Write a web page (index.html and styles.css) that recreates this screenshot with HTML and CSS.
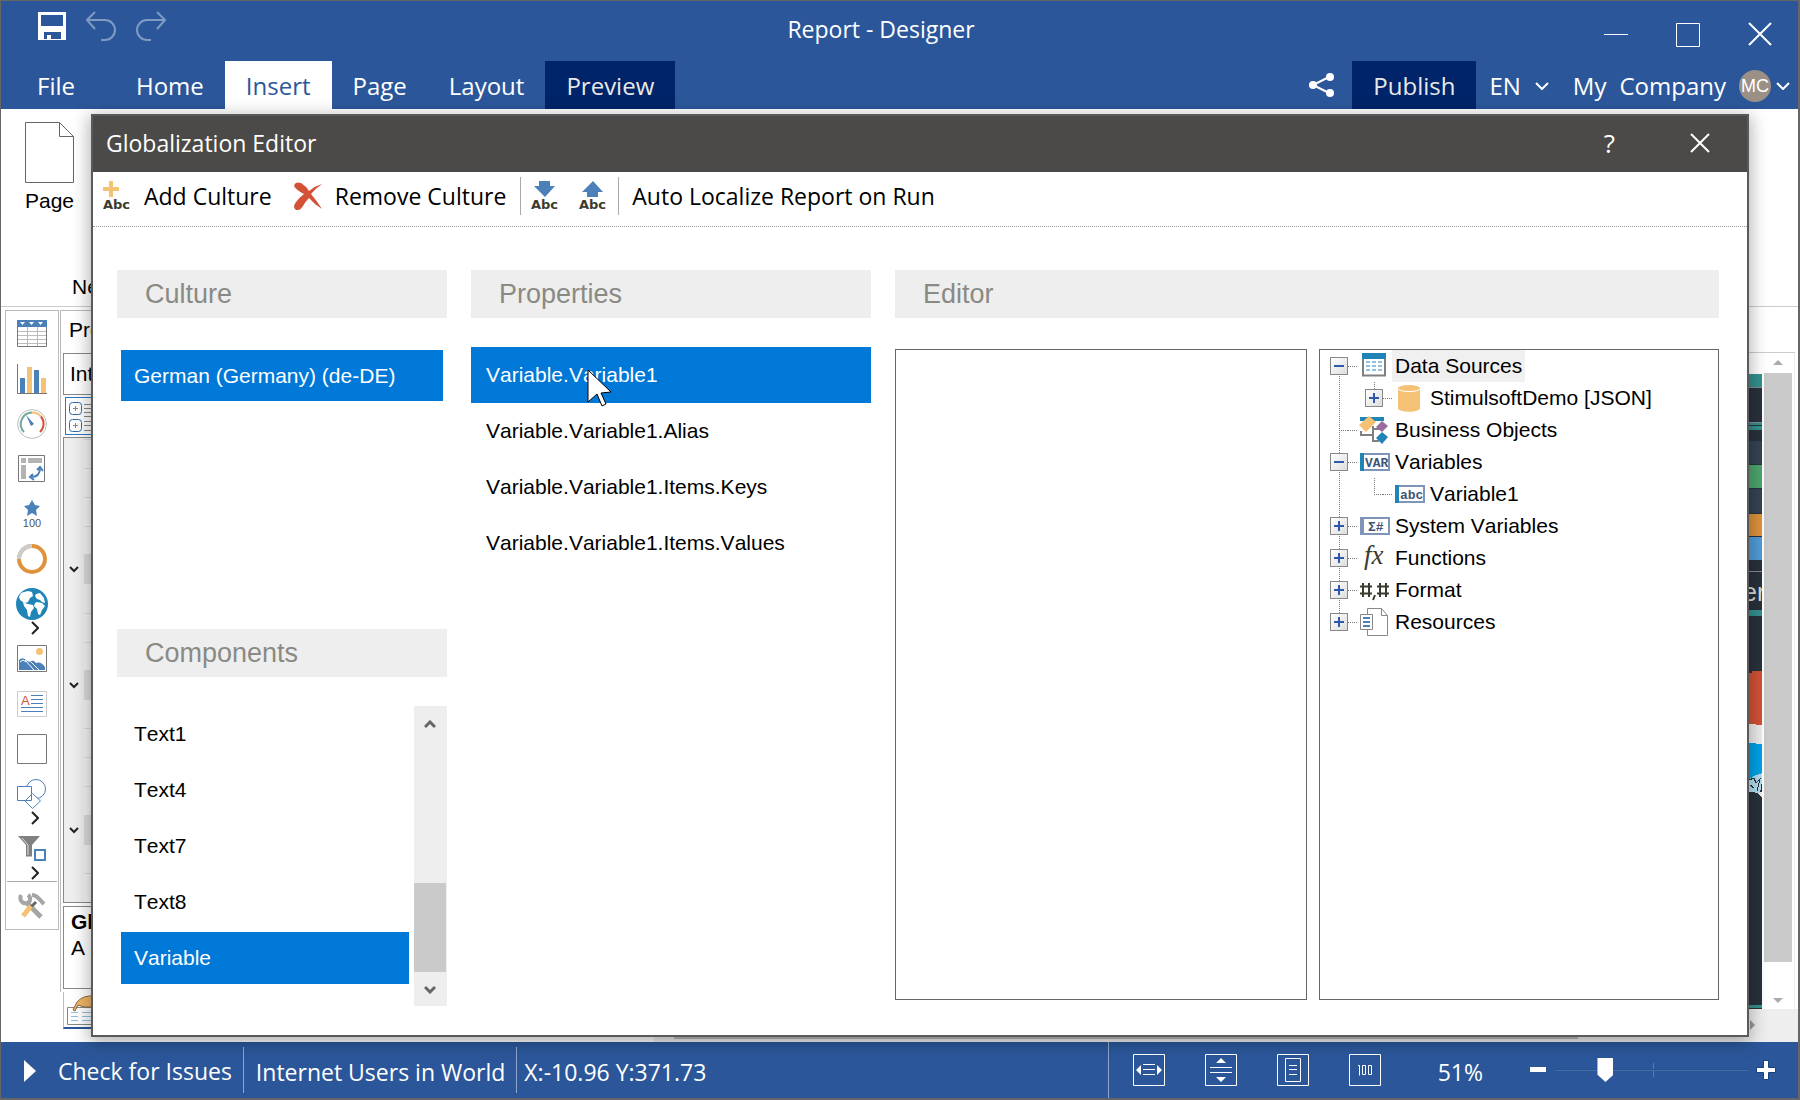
FILE: index.html
```html
<!DOCTYPE html>
<html lang="en">
<head>
<meta charset="utf-8">
<title>Report - Designer</title>
<link rel="stylesheet" href="styles.css">
</head>
<body>
<div class="window">
  <header class="top">
    <div class="titlebar">
      <div class="quick">
        <button aria-label="Save"><svg width="28" height="28" viewBox="0 0 28 28"><path fill="#fff" fill-rule="evenodd" d="M0 0h28v28H0zM3 3v11h22V3zM6 20v7h3v-4h4v4h10v-7z"/></svg></button>
        <button aria-label="Undo"><svg class="faded" width="30" height="31" viewBox="0 0 30 31"><path d="M9 1 1 9l8 9M1 9h18a10 10 0 0 1 0 20h-4"/></svg></button>
        <button aria-label="Redo"><svg class="faded" width="30" height="31" viewBox="0 0 30 31"><path d="m21 1 8 8-8 9M29 9H11a10 10 0 0 0 0 20h4"/></svg></button>
      </div>
      <h1>Report - Designer</h1>
      <div class="winctl">
        <button aria-label="Minimize"><svg width="24" height="26"><path d="M0 12.500h24"/></svg></button>
        <button aria-label="Maximize"><svg width="24" height="26"><path d="M.5 1.500h23v23H.5z"/></svg></button>
        <button aria-label="Close"><svg width="24" height="26"><path d="m1 1 22 22M23 1 1 23" stroke-width="2"/></svg></button>
      </div>
    </div>
    <nav class="tabs">
      <button class="file">File</button>
      <button>Home</button>
      <button class="on">Insert</button>
      <button>Page</button>
      <button>Layout</button>
      <button class="dark">Preview</button>
      <span class="grow"></span>
      <button class="share" aria-label="Share"><svg width="26" height="26" viewBox="0 0 26 26"><path d="M22 4 4 13l18 9" fill="none" stroke="#fff" stroke-width="2"/><g fill="#fff"><circle cx="21" cy="5" r="4"/><circle cx="4" cy="13" r="4"/><circle cx="21" cy="21" r="4"/></g></svg></button>
      <button class="dark publish">Publish</button>
      <button class="lang">EN <svg class="chev" width="14" height="8"><path d="m1 1 6 6 6-6"/></svg></button>
      <button class="account"><span>My</span><span>Company</span><span class="avatar">MC</span><svg class="chev" width="14" height="8"><path d="m1 1 6 6 6-6"/></svg></button>
    </nav>
  </header>

  <section class="ribbon">
    <button class="page-btn"><svg width="49" height="61" viewBox="0 0 49 61"><path d="M.5.5h34l14 14v46H.5zM34.500.5v14h14" fill="#fff" stroke="#666"/></svg>Page</button>
    <div class="group-name">Ne</div>
  </section>

  <main class="work">
    <aside class="tools">
      <button aria-label="Table"><svg width="30" height="27" viewBox="0 0 30 27"><path d="M.5.5h29v26H.5z" fill="#fff" stroke="#777"/><path d="M0 0h30v7H0z" fill="#4b80b9"/><path d="M3 2h5L5.500 5zM12 2h5l-2.500 3zM21 2h5l-2.500 3z" fill="#fff"/><path d="M1 11.500h28M1 15.500h28M1 19.500h28M1 23.500h28M10.500 7v19M20.500 7v19" stroke="#bbb"/></svg></button>
      <button aria-label="Chart"><svg width="30" height="30" viewBox="0 0 30 30"><path d="M.5 0v29.500H30" fill="none" stroke="#777"/><path d="M3 14h5v15H3zM17 6h5v23h-5z" fill="#4b80b9"/><path d="M10 3h5v26h-5zM24 14h5v15h-5z" fill="#f4c175"/></svg></button>
      <button aria-label="Gauge"><svg width="30" height="30" viewBox="0 0 30 30" fill="none"><circle cx="15" cy="15" r="14.400" stroke="#bbb"/><g stroke-width="2"><path d="M7 23A11.500 11.500 0 0 1 15 3.500" stroke="#6fa99c"/><path d="M15 3.500a11.500 11.500 0 0 1 9 4" stroke="#f4c175"/><path d="M24 7.500A11.500 11.500 0 0 1 23 23" stroke="#d35135"/></g><path d="m9 6 8 9-3 2z" fill="#4b80b9"/></svg></button>
      <button aria-label="Pivot table"><svg width="27" height="27" viewBox="0 0 27 27"><path d="M.5.5h26v26H.5z" fill="#fff" stroke="#777"/><path d="M3 3h5v5H3zM10 3h14v5H10zM3 10h5v14H3z" fill="#b3b3b3"/><path d="M13 22c6 0 9-3 9-9M15 19l-3 3 4 3M19 15l3-3 3 4" fill="none" stroke="#4b80b9" stroke-width="2"/></svg></button>
      <button aria-label="Indicator"><svg width="30" height="28" viewBox="0 0 30 28"><path d="m15 0 3 5 5 1-4 4 1 6-5-3-5 3 1-6-4-4 5-1z" fill="#4b80b9"/><text x="15" y="27" text-anchor="middle" font-size="11" fill="#555">100</text></svg></button>
      <button aria-label="Progress"><svg width="30" height="30" viewBox="0 0 30 30" fill="none" stroke-width="4"><circle cx="15" cy="15" r="13" stroke="#e0933e"/><path d="M2 15A13 13 0 0 1 15 2" stroke="#ccc"/></svg></button>
      <button aria-label="Map"><svg width="32" height="32" viewBox="0 0 32 32"><circle cx="16" cy="16" r="16" fill="#2084b6"/><path d="M8 4l4-1 4 1 1 4-3 2-2 4-3 1 3 1 5 1 1 3-3 4-1 5-2-1-1-6-3-4-1-4-3-2-1-3 2-4zM20 6l4-1 4 5 1 5-3-1-2-2-3-1-2-3zM21 14l5 1 3 3-3 4-2 5-2-1-1-5-3-3 1-3z" fill="#fff"/></svg></button>
      <svg class="more" width="8" height="14"><path d="m1 1 6 6-6 6"/></svg>
      <button aria-label="Image"><svg width="30" height="27" viewBox="0 0 30 27"><path d="M.5.500h29v26H.5z" fill="#fff" stroke="#777"/><path d="M2 25V15q4-4 8 1l3 1q3-3 6 1 5-2 9 4v3z" fill="#4b80b9"/><path d="m8 15 9 10M14 17l8 8M3 17l3-2 3 2" fill="none" stroke="#fff"/><circle cx="22.500" cy="6.500" r="3.500" fill="#f4c175"/></svg></button>
      <button aria-label="Text"><svg width="30" height="26" viewBox="0 0 30 26"><path d="M.5.5h29v25H.5z" fill="#fff" stroke="#ccc"/><path d="M14 4.500h12M14 8.500h12M14 12.500h12M4 16.500h22M4 20.500h22" stroke="#4b80b9"/><text x="4" y="14" font-size="13" fill="#d35135">A</text></svg></button>
      <button aria-label="Panel"><svg width="30" height="30"><path d="M.5.5h29v29H.5z" fill="#fff" stroke="#777"/></svg></button>
      <button aria-label="Shape"><svg width="30" height="30" viewBox="0 0 30 30" fill="#fff" stroke="#4b80b9"><circle cx="19" cy="10" r="9.500"/><path d="M.5 7.500h14v14H.5zM15.500 14.500l8 7.500-8 7.500-7.500-7.500z"/></svg></button>
      <svg class="more" width="8" height="14"><path d="m1 1 6 6-6 6"/></svg>
      <button aria-label="Filter"><svg width="30" height="26" viewBox="0 0 30 26"><path d="M1 0h22l-8 9v11.500H9V9z" fill="#808080"/><path d="m5 2 6 7v10" fill="none" stroke="#ddd"/><path d="M18 14h10v10H18z" fill="#fff" stroke="#4b80b9" stroke-width="2"/></svg></button>
      <svg class="more" width="8" height="14"><path d="m1 1 6 6-6 6"/></svg>
      <button class="setup" aria-label="Tools"><svg width="28" height="26" viewBox="0 0 28 26" fill="none" stroke-width="5"><path d="m9 10 14 14" stroke="#a5a5a5"/><path d="M3 2c-2 5 1 9 6 8 4-1 4-6 1-8" stroke="#a5a5a5" stroke-width="4"/><path d="m18 9-7 7" stroke="#666" stroke-width="3"/><path d="M13 13 5 23" stroke="#f4c175"/><path d="M14 2c5 0 7 4 12 9" stroke="#a5a5a5" stroke-width="4"/></svg></button>
    </aside>

    <aside class="props">
      <div class="props-title">Pro</div>
      <div class="props-select">Int</div>
      <div class="props-mode"><svg width="30" height="36" viewBox="0 0 30 36" fill="none"><g stroke="#2b6cb0"><rect x="3.500" y="4.500" width="12" height="12" rx="3"/><rect x="3.500" y="21.500" width="12" height="12" rx="3"/></g><path d="M7 10.500h5M9.500 8v5M7 27.500h5M9.500 25v5M18 6.500h12M18 10.500h12M18 14.500h12M18 18.500h12M18 23.500h12M18 27.500h12M18 32.500h12" stroke="#888"/></svg></div>
      <div class="props-grid">
        <svg width="30" height="464" viewBox="0 0 30 464"><path d="M20 0h10v464H20z" fill="#f5f5f5"/><path d="M20 116h10v30H20zM20 232h10v30H20zM20 377h10v30H20z" fill="#dcdcdc"/><path d="M20 1.500h10M20 30.500h10M20 59.500h10M20 88.500h10M20 175.500h10M20 204.500h10M20 290.500h10M20 319.500h10M20 348.500h10M20 435.500h10" stroke="#ddd"/><path d="m6 129 4 4 4-4M6 245l4 4 4-4M6 390l4 4 4-4" fill="none" stroke="#222" stroke-width="2"/></svg>
      </div>
      <div class="props-help"><b>Gl</b><span>A</span></div>
      <div class="props-tab"><svg width="30" height="35" viewBox="0 0 30 35"><path d="M3.500 15.500h30v17h-30z" fill="#fff" stroke="#888"/><path d="M7 20.500h7M18 20.500h9M7 24.500h7M18 24.500h9M7 28.500h7M18 28.500h9" stroke="#8fbfe3"/><path d="m9 18 4-8q6-7 17-6v11H20l-6-2-3 6z" fill="#f0b565" stroke="#8a6a40"/></svg></div>
    </aside>

    <section class="canvas">
      <svg width="13" height="635" viewBox="0 0 13 635" shape-rendering="crispEdges">
        <path fill="#29313c" d="M0 0h13v635H0z"/>
        <path fill="#32918f" d="M0 0h13v13H0zM0 48h13v8H0zM0 236h13v6H0zM0 631h13v3H0z"/>
        <path fill="#889" d="M0 13h13v1H0zM0 48h13v1H0zM0 197h13v1H0z"/>
        <path fill="#29313c" d="M0 51h13v1H0z"/>
        <path fill="#354356" d="M0 67h13v23H0zM0 115h13v24H0z"/>
        <path fill="#4ea56e" d="M0 91h13v23H0z"/>
        <path fill="#de923c" d="M0 140h13v22H0z"/>
        <path fill="#529cd8" d="M0 163h13v23H0z"/>
        <path fill="#d35135" d="M0 299h3v-2h10v54H0z"/>
        <path fill="#eee" d="M0 350l13 1v19H0zM9 418h4v6l-4-4z"/>
        <path fill="#00a2e8" d="M0 369l13 1v35H0z"/>
        <path fill="#b4dff2" d="M0 405l7-4 6-2v8l-2 12-11-1z"/>
        <path fill="none" stroke="#29313c" d="M0 406l5-2 2 5 4-4-3 12M1 411l4 3"/>
        <text x="-6" y="227" font-size="25" fill="#ddd">er</text>
      </svg>
      <div class="vscroll"><i class="up"></i><span></span><i class="down"></i></div>
    </section>
    <div class="hscroll"><span></span></div>
    <i class="hscroll-end"></i>
  </main>

  <footer class="status">
    <button class="check"><svg width="12" height="22"><path d="M0 0l12 11L0 22z" fill="#fff"/></svg>Check for Issues</button>
    <span class="cell report">Internet Users in World</span>
    <span class="cell coords">X:-10.96 Y:371.73</span>
    <div class="views">
      <button aria-label="Page width"><svg width="32" height="32" viewBox="0 0 32 32"><path d="M.5.500h31v31H.500zM10 10.500h12M10 15.500h12M10 20.500h12" class="ln"/><path d="M8 11v10l-5-5zM24 11v10l5-5z" fill="#fff"/></svg></button>
      <button aria-label="Page height"><svg width="32" height="32" viewBox="0 0 32 32"><path d="M.5.500h31v31H.500zM5 13.500h22M5 18.500h22" class="ln"/><path d="M11 9h10l-5-5zM11 23h10l-5 5z" fill="#fff"/></svg></button>
      <button aria-label="Whole page"><svg width="32" height="32" viewBox="0 0 32 32"><path d="M.5.500h31v31H.500zM8.500 4.500h15v23h-15zM12 11.500h8M12 15.500h8M12 20.500h8" class="ln"/></svg></button>
      <button aria-label="Actual size"><svg width="32" height="32" viewBox="0 0 32 32"><path d="M.5.500h31v31H.500zM9 11.500h1.500v10M13.500 11.500h3v9h-3zM19.500 11.500h3v9h-3z" class="ln"/></svg></button>
      <span class="percent">51%</span>
      <button class="minus" aria-label="Zoom out"><svg width="18" height="8"><path d="M1 1h16v5H1z" fill="#fff"/></svg></button>
      <input type="range" min="0" max="100" value="24" aria-label="Zoom">
      <button aria-label="Zoom in"><svg width="20" height="20" viewBox="0 0 20 20"><path d="M7.500.5h5v7h7v5h-7v7h-5v-7h-7v-5h7z" fill="#fff" stroke="#17427f"/></svg></button>
    </div>
  </footer>

  <div class="dialog" role="dialog" aria-label="Globalization Editor">
    <div class="dlg-title">
      <h2>Globalization Editor</h2>
      <button class="help" aria-label="Help">?</button>
      <button aria-label="Close"><svg width="20" height="20"><path d="m1 1 18 18M19 1 1 19" stroke="#fff" stroke-width="2"/></svg></button>
    </div>
    <div class="dlg-tools">
      <button class="add"><svg width="28" height="30" viewBox="0 0 28 30"><path d="M6 0h4v6h6v4h-6v6H6v-6H0V6h6z" fill="#f4c175"/><text x="0" y="28" class="abc">Abc</text></svg>Add Culture</button>
      <button class="remove"><svg width="28" height="28" viewBox="0 0 28 28"><path d="M0 4Q1-1 7 1q5 3 8 8 6-5 13-7-7 5-11 10 6 7 11 15-8-5-13-11-4 4-6 8-3 5-7 4-4-3 0-8 4-5 8-8Q2 8 0 4z" fill="#d35135"/></svg>Remove Culture</button>
      <div class="xfer">
        <button aria-label="Export"><svg width="28" height="30" viewBox="0 0 28 30"><path d="M8 0h11v5h5l-10 11L3 5h5z" fill="#4b80b9"/><text x="0" y="28" class="abc">Abc</text></svg></button>
        <button aria-label="Import"><svg width="28" height="30" viewBox="0 0 28 30"><path d="M8 16h11v-5h5L14 0 3 11h5z" fill="#4b80b9"/><text x="0" y="28" class="abc">Abc</text></svg></button>
      </div>
      <button class="auto">Auto Localize Report on Run</button>
    </div>
    <div class="dlg-body">
      <div class="col">
        <h3>Culture</h3>
        <div class="list cultures"><button class="sel">German (Germany) (de-DE)</button></div>
        <h3>Components</h3>
        <div class="components">
          <div class="list">
            <button>Text1</button>
            <button>Text4</button>
            <button>Text7</button>
            <button>Text8</button>
            <button class="sel">Variable</button>
          </div>
          <div class="scroll">
            <svg width="12" height="9"><path d="m1 7 5-5 5 5"/></svg>
            <span></span>
            <svg width="12" height="9"><path d="m1 2 5 5 5-5"/></svg>
          </div>
        </div>
      </div>
      <div class="col">
        <h3>Properties</h3>
        <div class="list properties">
          <button class="sel">Variable.Variable1</button>
          <button>Variable.Variable1.Alias</button>
          <button>Variable.Variable1.Items.Keys</button>
          <button>Variable.Variable1.Items.Values</button>
        </div>
      </div>
      <div class="col">
        <h3>Editor</h3>
        <div class="editor">
          <textarea aria-label="Editor"></textarea>
          <ul class="tree">
            <li><div class="node"><button class="tg" aria-label="Collapse"></button><svg class="ic" width="30" height="28" viewBox="0 0 30 28"><path d="M3 4.500h22v19H3z" fill="#fff" stroke="#808080" stroke-width="2"/><path d="M2 1h24v6H2z" fill="#2084b6"/><path d="M6 10h16M6 14h16M6 18h16" stroke="#8fc3e6" stroke-width="2" stroke-dasharray="4 2"/></svg><span class="hot">Data Sources</span></div>
              <ul><li><div class="node"><button class="tg plus" aria-label="Expand"></button><svg class="ic" width="30" height="28" viewBox="0 0 30 28"><path d="M3 4v20c0 5 22 5 22 0V4z" fill="#f4c175"/><ellipse cx="14" cy="4" rx="11" ry="3" fill="#f4c175"/><path d="M3 4.500c0 4 22 4 22 0" fill="none" stroke="#fff"/></svg><span>StimulsoftDemo [JSON]</span></div></li></ul></li>
            <li><div class="node"><i class="stub"></i><svg class="ic" width="30" height="28" viewBox="0 0 30 28"><path d="M0 1h24v4H0z" fill="#2084b6"/><path d="M1 15v4h11M13 10v15h6M13 13h8" fill="none" stroke="#808080" stroke-width="2"/><path d="m-1 9 10-9 7 6-10 10z" fill="#f4c175"/><path d="m16 11 6-6 6 5-6 6z" fill="#9b6b9e"/><path d="m16 22 6-6 6 5-6 7z" fill="#2084b6"/></svg><span>Business Objects</span></div></li>
            <li><div class="node"><button class="tg" aria-label="Collapse"></button><svg class="ic" width="30" height="18" viewBox="0 0 30 18"><path d="M1 1h28v16H1z" fill="#fff" stroke="#7f95b8" stroke-width="2"/><path d="M0 0h4v18H0z" fill="#2084b6"/><text x="5" y="14" class="tag">VAR</text></svg><span>Variables</span></div>
              <ul><li><div class="node"><i class="stub"></i><svg class="ic" width="30" height="18" viewBox="0 0 30 18"><path d="M1 1h28v16H1z" fill="#fff" stroke="#7f95b8" stroke-width="2"/><path d="M0 0h4v18H0z" fill="#2084b6"/><text x="5" y="14" class="tag">abc</text></svg><span>Variable1</span></div></li></ul></li>
            <li><div class="node"><button class="tg plus" aria-label="Expand"></button><svg class="ic" width="30" height="18" viewBox="0 0 30 18"><path d="M1 1h28v16H1z" fill="#fff" stroke="#7f95b8" stroke-width="2"/><path d="M0 0h4v18H0z" fill="#7f95b8"/><text x="8" y="14" class="tag">Σ#</text></svg><span>System Variables</span></div></li>
            <li><div class="node"><button class="tg plus" aria-label="Expand"></button><svg class="ic" width="30" height="28" viewBox="0 0 30 28"><text x="4" y="20" class="fx">fx</text></svg><span>Functions</span></div></li>
            <li><div class="node"><button class="tg plus" aria-label="Expand"></button><svg class="ic" width="30" height="28" viewBox="0 0 30 28"><path d="M3 7v14M9 7v14M0 10.500h12M0 17.500h12M20 7v14M26 7v14M17 10.500h12M17 17.500h12M15 19l-2 5" fill="none" stroke="#3c3b30" stroke-width="2"/></svg><span>Format</span></div></li>
            <li><div class="node"><button class="tg plus" aria-label="Expand"></button><svg class="ic" width="30" height="28" viewBox="0 0 30 28"><path d="M7.500.5h14l6 7v20h-20zM21.500.5v7h6" fill="#fff" stroke="#888"/><path d="M.5 6.500h12v15H.5z" fill="#fff" stroke="#888"/><path d="M3 10h7M3 14h7M3 18h7" stroke="#4b80b9" stroke-width="2"/></svg><span>Resources</span></div></li>
          </ul>
        </div>
      </div>
    </div>
  </div>

  <svg class="cursor" width="26" height="40" viewBox="0 0 26 40"><path d="M1 1v32l9-8 5 12 4-2-5-11 10-1z" fill="#fff" stroke="#000"/></svg>
</div>
</body>
</html>
```
FILE: styles.css
```css
* { box-sizing: border-box; }
body { margin: 0; font: 21px/24px "Liberation Sans", Arial, sans-serif; font-kerning: none; color: #000; }
button { font: inherit; font-kerning: inherit; color: inherit; background: none; border: 0; padding: 0; margin: 0; display: flex; align-items: center; justify-content: center; white-space: nowrap; }
h1, h2, h3, ul { margin: 0; padding: 0; font-weight: 400; }
li { list-style: none; }
svg { display: block; flex: none; }
.window { position: relative; min-height: 100vh; display: flex; flex-direction: column; background: #fff; border: 1px solid #666; border-right-width: 2px; border-bottom-width: 2px; }
.top, .status, .dialog h2, .dlg-tools { font-family: "Open Sans", sans-serif; font-size: 23px; }
.top { background: #2b579a; color: #fff; }

/* Title bar and tabs */
.titlebar { display: grid; grid-template-columns: 1fr auto 1fr; align-items: center; height: 60px; padding: 0 26px 4px 37px; }
.titlebar h1 { font-size: 23px; margin-right: 48px; }
.quick { display: flex; gap: 20px; padding-bottom: 6px; }
.faded path { fill: none; stroke: #7f9ac3; stroke-width: 2; }
.winctl { display: flex; justify-content: flex-end; gap: 48px; padding-top: 12px; }
.winctl path { fill: none; stroke: #fff; }
.tabs { display: flex; height: 48px; font-size: 24px; }
.tabs button { padding: 2px 21px 0; }
.tabs .file { padding: 2px 40px 0 36px; }
.tabs .on { background: #fff; color: #2b579a; }
.tabs .dark { background: #002469; color: #e8e8e8; }
.tabs .grow { flex: 1; }
.tabs .share { padding: 0 17px; }
.tabs .lang { padding: 2px 13px 0; gap: 14px; }
.tabs .account { padding: 2px 8px 0 11px; gap: 13px; }
.chev { fill: none; stroke: #fff; stroke-width: 2; }
.avatar { width: 32px; height: 32px; border-radius: 50%; background: #9b9086; font: 18px/32px "Liberation Sans", sans-serif; margin-right: -8px; }

/* Ribbon */
.ribbon { height: 198px; border-bottom: 1px solid #ccc; display: flex; flex-direction: column; justify-content: space-between; }
.page-btn { flex-direction: column; gap: 6px; width: 97px; padding-top: 13px; }
.group-name { padding: 0 0 7px 71px; }

/* Component toolbox */
.work { flex: 1; display: flex; padding-top: 3px; position: relative; }
.tools { width: 54px; margin-left: 4px; border: 1px solid #bbb; align-self: flex-start; display: flex; flex-direction: column; align-items: center; padding-right: 1px; }
.tools button { height: 45px; width: 46px; }
.tools .more { margin: -5px 0 1px 6px; fill: none; stroke: #222; stroke-width: 2; }
.tools .setup { border-top: 1px solid #aaa; width: 50px; height: 48px; }

/* Property panel */
.props { width: 41px; margin-left: 1px; border-left: 1px solid #bbb; border-top: 1px solid #bbb; align-self: flex-start; height: 682px; }
.props > * { margin-left: 2px; }
.props .props-title { padding: 7px 0 0 8px; height: 42px; margin-left: 0; }
.props-select { height: 42px; border: 1px solid #888; border-right: 0; padding: 8px 0 0 6px; margin-bottom: 2px; }
.props .props-mode { margin-left: 4px; border: 1px solid #2b78c0; border-right: 0; height: 38px; margin-bottom: 2px; }
.props-grid { border: 1px solid #888; border-right: 0; background: #eee; height: 466px; overflow: hidden; margin-bottom: 3px; }
.props-help { border: 1px solid #888; border-right: 0; height: 83px; padding: 3px 0 0 7px; display: flex; flex-direction: column; gap: 2px; margin-bottom: 3px; }
.props-tab { border-left: 1px solid #bbb; border-bottom: 2px solid #2b579a; overflow: hidden; }

/* Report canvas */
.canvas { flex: 1; display: flex; justify-content: flex-end; align-items: flex-start; margin-top: 42px; margin-right: 3px; margin-bottom: 33px; border-top: 1px solid #ccc; }
.canvas > svg { margin: 21px 2px 0 0; }
.vscroll { width: 31px; align-self: stretch; display: flex; flex-direction: column; align-items: center; padding: 7px 3px 6px 0; border-right: 1px solid #eee; }
.vscroll span { width: 28px; flex: 1; background: #cacaca; margin: 8px 0 36px; }
.up, .down { border: 5px solid transparent; border-top: 0; border-bottom-color: #aaa; }
.down { border-top: 5px solid #aaa; border-bottom: 0; }
.hscroll { position: absolute; left: 653px; right: 0; bottom: 0; height: 33px; background: #eee; }
.hscroll span { display: block; margin: 4px 220px 0 20px; height: 26px; background: #b8b8b8; }
.hscroll-end { position: absolute; right: 43px; bottom: 12px; border: 5px solid transparent; border-left-color: #999; border-right: 0; }

/* Status bar */
.status { height: 56px; background: #2b579a; color: #fff; display: flex; align-items: center; }
.status .check { padding: 2px 11px 0 23px; gap: 22px; height: 46px; border-right: 1px solid #8fa6cb; }
.cell { height: 46px; padding-top: 2px; line-height: 46px; }
.report { padding-left: 12px; padding-right: 11px; border-right: 1px solid #8fa6cb; }
.coords { padding-left: 7px; }
.views { margin-left: auto; align-self: stretch; display: flex; align-items: center; border-left: 1px solid #8fa6cb; padding: 0 22px 0 24px; gap: 40px; }
.ln { fill: none; stroke: #fff; }
.percent { margin-left: 17px; padding-top: 4px; }
.views .minus { margin-left: 6px; }
.views input { appearance: none; width: 193px; height: 26px; margin: 0 -32px; background: linear-gradient(#17427f, #4b80b9) 0 50% / 100% 2px no-repeat, linear-gradient(#4b80b9, #4b80b9) 51% 50% / 1px 14px no-repeat; }
.views input::-webkit-slider-thumb { appearance: none; width: 16px; height: 24px; background: #fff; clip-path: polygon(0 0, 100% 0, 100% 70%, 50% 100%, 0 70%); }

/* Globalization dialog */
.dialog { position: absolute; left: 90px; right: 49px; top: 113px; bottom: 61px; background: #fff; border: 2px solid #5a5a5a; box-shadow: 0 4px 16px 2px rgba(0, 0, 0, .3); display: flex; flex-direction: column; }
.dlg-title { height: 56px; background: #4c4a48; color: #fff; display: flex; align-items: center; padding: 0 37px 2px 13px; }
.dlg-title h2 { flex: 1; font-size: 23px; }
.dlg-title .help { font-family: "Open Sans", sans-serif; font-size: 26px; margin-right: 75px; }
.dlg-tools { height: 55px; border-bottom: 1px dotted #999; display: flex; align-items: center; padding: 0 0 6px 10px; }
.abc { font: bold 13px "DejaVu Sans", sans-serif; fill: #3c3b30; }
.add, .remove { gap: 13px; }
.add { margin: 0 22px 0 0; }
.dlg-tools .remove { margin-right: 14px; }
.xfer { display: flex; gap: 20px; height: 38px; padding: 0 11px 0 10px; border-left: 1px solid #aaa; border-right: 1px solid #aaa; }
.dlg-tools .auto { margin-left: 13px; }

.dlg-body { flex: 1; display: grid; grid-template-columns: 330px 400px 1fr; gap: 24px; padding: 43px 28px 29px 24px; }
.col { display: flex; flex-direction: column; }
.col h3 { background: #eee; color: #8a8a85; font-size: 27px; line-height: 48px; padding-left: 28px; }
.list { display: flex; flex-direction: column; }
.list button { justify-content: flex-start; height: 56px; padding-left: 15px; }
.list .sel { background: #0078d7; color: #fff; }
.properties { margin-top: 29px; }
.cultures { margin: 32px 4px 228px; }
.cultures button, .components .sel { height: 51px; padding-left: 13px; }
.components { display: flex; flex: 1; margin-top: 29px; }
.components .list { flex: 1; margin: 0 5px 0 4px; }
.components button { padding-left: 13px; }
.components .sel { margin-top: 2px; height: 52px; }
.scroll { width: 33px; height: 300px; background: #eee; display: flex; flex-direction: column; align-items: center; padding: 14px 1px 12px 0; }
.scroll span { width: 32px; height: 89px; background: #cacaca; margin: auto 0 13px; }
.scroll svg { fill: none; stroke: #666; stroke-width: 3; }
.editor { flex: 1; display: grid; grid-template-columns: 1fr 400px; gap: 12px; margin-top: 31px; margin-bottom: 6px; }
textarea { display: block; width: 100%; resize: none; border: 1px solid #666; background: #fff; }

/* Dictionary tree, with dotted connectors */
.tree { --across: repeating-linear-gradient(90deg, #777 0 1px, #fff 1px 2px); --down: repeating-linear-gradient(#777 0 1px, #fff 1px 2px); border: 1px solid #666; }
.tree > li { padding-left: 10px; background: var(--down) 19px 0 / 1px 100% no-repeat; }
.tree > li:last-child { background-size: 1px 16px; }
.tree > li:first-child { background-position: 19px 16px; }
.tree ul { padding-left: 35px; background: var(--down) 44px 0 / 1px 16px no-repeat; }
.node { display: flex; align-items: center; height: 32px; background: var(--across) 18px 50% / 10px 1px no-repeat; }
.stub { width: 18px; height: 1px; background: var(--across) 9px 0 / 9px 1px no-repeat; }
.tg { width: 18px; height: 18px; border: 1px solid #888; background: linear-gradient(#2f5aa8, #2f5aa8) 50% 50% / 10px 2px no-repeat, linear-gradient(135deg, #fff, #ddd); }
.tg.plus { background: linear-gradient(#2f5aa8, #2f5aa8) 50% 50% / 10px 2px no-repeat, linear-gradient(#2f5aa8, #2f5aa8) 50% 50% / 2px 10px no-repeat, linear-gradient(135deg, #fff, #ddd); }
.ic { margin: 0 2px 0 12px; overflow: visible; }
.node span { line-height: 32px; padding: 0 3px; }
.node .hot { background: #f0f0f0; }
.tag { font: bold 13px "Liberation Mono", monospace; fill: #3e5575; }
.fx { font: italic 27px "Liberation Serif", serif; fill: #3c3b30; }
.cursor { position: absolute; left: 586px; top: 368px; }
```
